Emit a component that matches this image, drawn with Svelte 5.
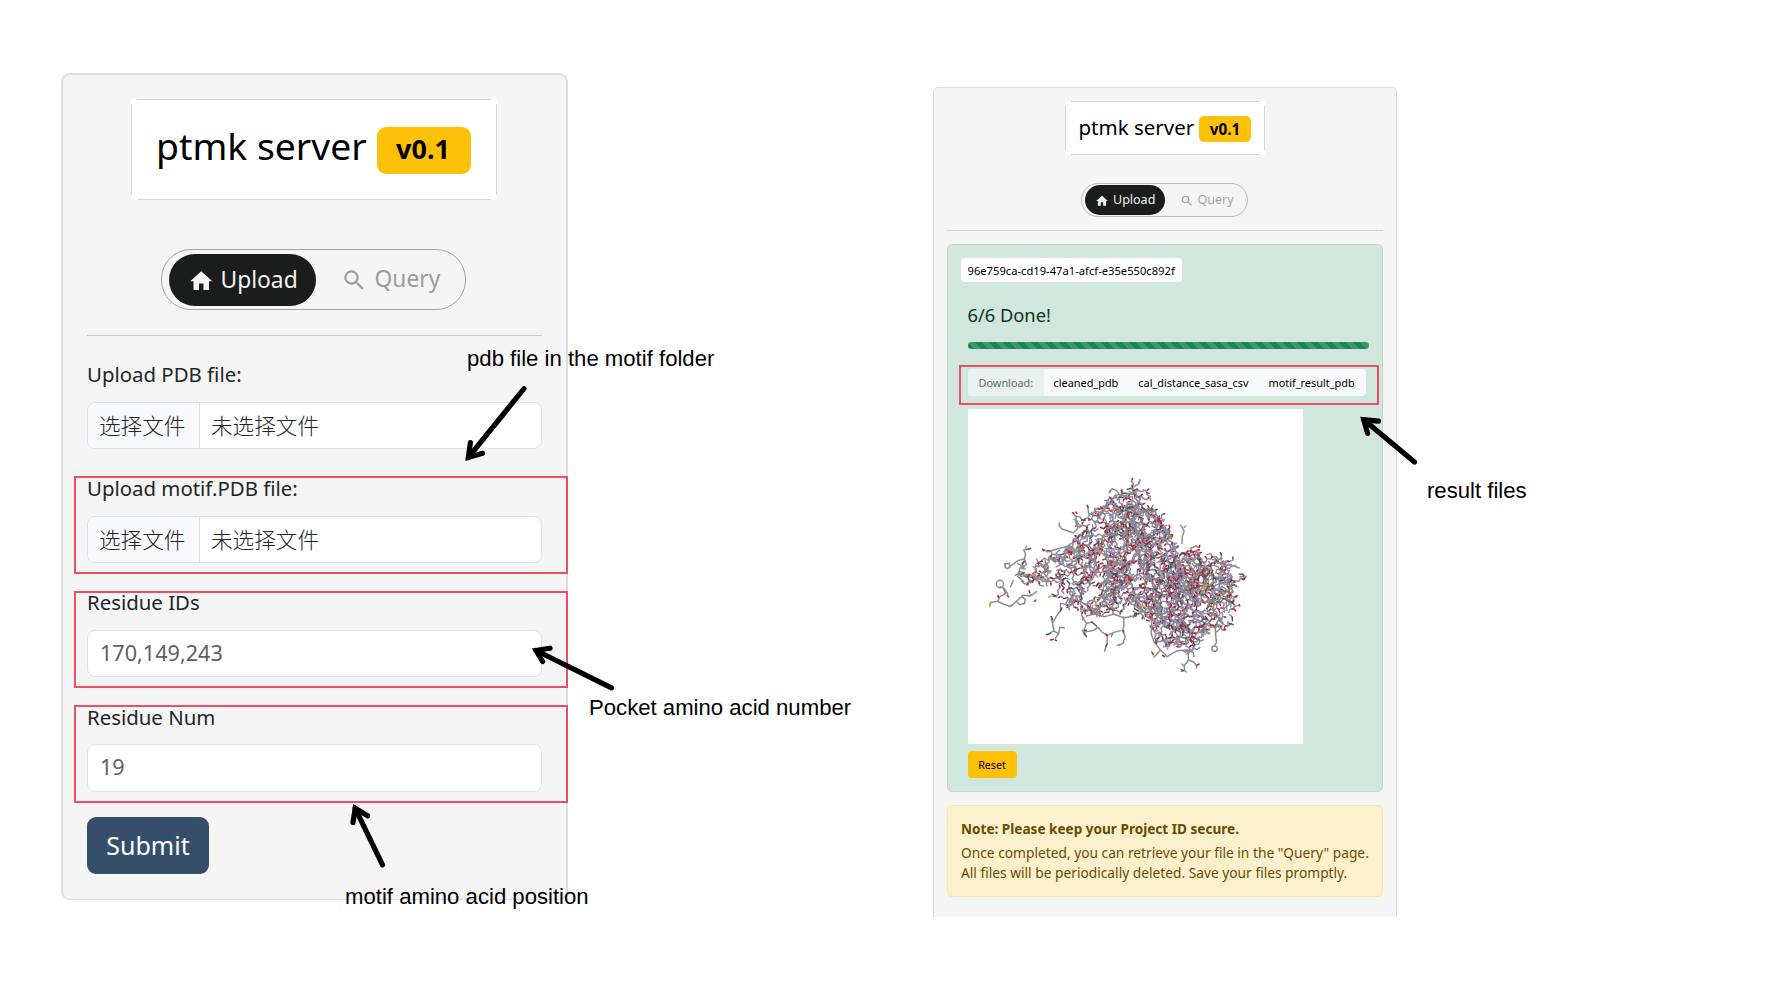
<script>
  const homePath = 'M10,20V14H14V20H19V12H22L12,3L2,12H5V20H10Z';
  const searchPath =
    'M9.5,3A6.5,6.5 0 0,1 16,9.5C16,11.11 15.41,12.59 14.44,13.73L14.71,14H15.5L20.5,19L19,20.5L14,15.5V14.71L13.73,14.44C12.59,15.41 11.11,16 9.5,16A6.5,6.5 0 0,1 3,9.5A6.5,6.5 0 0,1 9.5,3M9.5,5C7,5 5,7 5,9.5C5,12 7,14 9.5,14C12,14 14,12 14,9.5C14,7 12,5 9.5,5Z';

  const fields = [
    { label: 'Upload PDB file:', file: true },
    { label: 'Upload motif.PDB file:', file: true },
    { label: 'Residue IDs', value: '170,149,243' },
    { label: 'Residue Num', value: '19' }
  ];
  const downloads = ['cleaned_pdb', 'cal_distance_sasa_csv', 'motif_result_pdb'];

  // Each arrow: tail, tip, and the two barb ends.
  const arrows = [
    { tail: [524, 388.7], tip: [468.4, 457.4], a: [470.4, 442.5], b: [482.5, 453.2] },
    { tail: [611.5, 687.8], tip: [536, 650.5], a: [550, 648.2], b: [542.6, 661.5] },
    { tail: [382.5, 864.8], tip: [355.2, 808.3], a: [367.6, 815.8], b: [353, 822.5] },
    { tail: [1414.5, 462], tip: [1363.8, 419.8], a: [1378.5, 421.2], b: [1367.6, 433.4] }
  ];

  // Stick model of the protein: random bonded chains inside the outline.
  const outline = [
    [470, 98], [515, 78], [562, 92], [585, 150], [628, 195], [640, 255], [700, 265], [760, 288],
    [830, 315], [845, 375], [825, 440], [812, 500], [755, 505], [715, 560], [680, 595], [640, 550],
    [600, 585], [572, 520], [575, 478], [500, 468], [400, 462], [330, 440], [290, 410], [225, 375],
    [175, 372], [165, 312], [240, 303], [300, 268], [350, 230], [350, 180], [405, 145]
  ];
  const colours = { c: '#8b8b8d', n: '#8b8dc6', k: '#4c4d52', s: '#d3a22f', o: '#c2162b' };

  function inside(x, y) {
    let hit = false;
    for (let i = 0, j = outline.length - 1; i < outline.length; j = i++) {
      const [xi, yi] = outline[i];
      const [xj, yj] = outline[j];
      if (yi > y !== yj > y && x < ((xj - xi) * (y - yi)) / (yj - yi) + xi) hit = !hit;
    }
    return hit;
  }

  function buildMolecule() {
    let seed = 20711;
    const rnd = () => {
      seed = (seed + 0x6d2b79f5) | 0;
      let t = Math.imul(seed ^ (seed >>> 15), 1 | seed);
      t = (t + Math.imul(t ^ (t >>> 7), 61 | t)) ^ t;
      return ((t ^ (t >>> 14)) >>> 0) / 4294967296;
    };
    const layers = [];
    for (let layer = 0; layer < 10; layer++) {
      const d = { c: '', n: '', k: '', s: '', o: '' };
      for (let chain = 0; chain < 66; ) {
        let x = 150 + rnd() * 700;
        let y = 75 + rnd() * 530;
        if (!inside(x, y)) continue;
        if (x < 360 && rnd() < 0.45) continue;
        chain++;
        let angle = rnd() * Math.PI * 2;
        const steps = 4 + Math.floor(rnd() * 4);
        for (let i = 0; i < steps; i++) {
          angle += (i % 2 ? 1 : -1) * (0.7 + rnd() * 0.7);
          const nx = x + Math.cos(angle) * 11;
          const ny = y + Math.sin(angle) * 11;
          if (!inside(nx, ny) && rnd() < 0.6) break;
          const r = rnd();
          const kind = r < 0.66 ? 'c' : r < 0.88 ? 'n' : r < 0.995 ? 'k' : 's';
          d[kind] += `M${x.toFixed(1)} ${y.toFixed(1)}L${nx.toFixed(1)} ${ny.toFixed(1)}`;
          if (rnd() < 0.25) {
            const t = angle + (rnd() < 0.5 ? 1.1 : -1.1);
            const mx = nx + Math.cos(t) * 5;
            const my = ny + Math.sin(t) * 5;
            d.c += `M${nx.toFixed(1)} ${ny.toFixed(1)}L${mx.toFixed(1)} ${my.toFixed(1)}`;
            d.o += `M${mx.toFixed(1)} ${my.toFixed(1)}l${(Math.cos(t) * 4).toFixed(1)} ${(Math.sin(t) * 4).toFixed(1)}`;
          }
          x = nx;
          y = ny;
        }
      }
      layers.push(d);
    }
    return layers;
  }
  const layers = buildMolecule();

  // Side chains that stick out of the dense core.
  const strands = [
    ['c', 'M88 436L91 427L112 424L128 432L150 439L168 424L188 405L210 408L228 395M112 424L118 410L135 400L128 384L119 380M130 384L142 402M150 380L158 362M168 424L178 434L192 430L194 418L184 410M129 372a11 11 0 1 0 -22 0a11 11 0 1 0 22 0'],
    ['c', 'M150 318L172 302L192 297L195 282L190 270L204 267M192 297L198 315L178 325L172 350L190 365M135 312L146 310L149 320L142 326L134 322Z'],
    ['c', 'M296 196L303 206L322 213L338 219M338 219L352 205L346 180M448 96L455 86L468 92L478 104L492 108M520 80L532 74L538 62M382 140L384 160L400 165M338 160L347 172L346 190'],
    ['c', 'M664 250L666 228L671 214L665 202M690 265L705 258L716 262M250 268L262 276L280 270L300 264L326 258L340 265L342 284M338 244L336 262'],
    ['c', 'M300 430L300 452L288 468L276 490L280 512L262 524M280 512L294 522L284 536M294 522L298 502L312 504M330 436L300 430M276 490L272 470'],
    ['c', 'M360 440L364 468L378 490L394 486M378 490L370 512L376 528M376 515L398 512L412 502L424 516L440 526L458 518L480 512M440 526L440 548L434 568M458 518L452 530M490 470L490 500L486 512L494 530L488 550L476 555'],
    ['c', 'M378 468L400 462L432 470L460 462L490 474L520 468M575 470L572 520L580 545L600 570L580 592M600 570L620 590L650 572L682 570M682 570L684 600L672 616L672 632L662 634M672 632L678 636M684 600L700 606L708 616M664 612L672 620'],
    ['c', 'M764 500L766 530L768 548L762 556M770 566a8 8 0 1 0 -16 0a8 8 0 1 0 16 0M800 500L812 490M820 440L836 436M838 350L854 350M782 282L782 300M820 318L836 324M764 520L780 505'],
    ['n', 'M296 188L296 197M446 99L448 92M538 58L536 70M664 200L660 196M671 202L676 198M132 310L136 324M470 556L478 553M432 574L434 566M212 404L204 408M148 438L156 436M342 240L350 230M280 506L278 498M198 258L196 266M366 510L370 520M708 618L709 624M370 472L366 480M228 298L232 304'],
    ['k', 'M258 524L270 520M272 470L276 478M394 486L408 498M370 520L378 530M436 560L440 552M300 452L304 444M806 490L818 494M668 632L662 628'],
    ['s', 'M88 440L88 430M216 346L223 344M234 358L238 350M264 412L272 408M728 378L732 396M548 438L556 442M754 442L762 438'],
    ['o', 'M204 268L210 265M112 406L114 412M140 406L144 410M284 540L288 542M270 540L278 538M380 136L383 142M336 158L340 160M346 156L349 160M246 268L250 272M574 576L578 584M708 616L716 612M780 278L783 284M836 434L838 438M436 522L440 528M488 512L490 516M222 424L226 420M206 392L208 398M372 512L378 510M716 262L718 256M606 586L612 590M514 76L516 82M626 196L628 202M560 98L566 100']
  ];
</script>

{#snippet icon(path)}
  <svg class="icon" viewBox="0 0 24 24"><path d={path} fill="currentColor" /></svg>
{/snippet}

{#snippet heading()}
  <div class="brand">
    <span class="name">ptmk server</span>
    <span class="version">v0.1</span>
  </div>
  <nav class="tabs">
    <span class="tab active">{@render icon(homePath)}Upload</span>
    <span class="tab">{@render icon(searchPath)}Query</span>
  </nav>
  <hr />
{/snippet}

<main class="board">
  <section class="card form">
    {@render heading()}
    {#each fields as field}
      <div class="field">
        <span class="label">{field.label}</span>
        <div class="input">
          {#if field.file}
            <span class="choose">选择文件</span><span class="chosen">未选择文件</span>
          {:else}
            <span class="value">{field.value}</span>
          {/if}
        </div>
      </div>
    {/each}
    <button class="submit">Submit</button>
  </section>

  <section class="card result">
    {@render heading()}
    <div class="done">
      <span class="uuid">96e759ca-cd19-47a1-afcf-e35e550c892f</span>
      <div class="status">6/6 Done!</div>
      <div class="progress"></div>
      <div class="downloads">
        <span class="lead">Download:</span>
        {#each downloads as name}<span class="file">{name}</span>{/each}
      </div>
      <div class="viewer">
        <svg viewBox="22.5 -153 1005 1005">
          {#each layers as layer}
            {#each Object.entries(layer) as [kind, d]}
              <path {d} stroke={colours[kind]} />
            {/each}
          {/each}
          {#each strands as [kind, d]}
            <path {d} stroke={colours[kind]} />
          {/each}
        </svg>
      </div>
      <button class="reset">Reset</button>
    </div>
    <div class="note">
      <strong>Note: Please keep your Project ID secure.</strong>
      <span>Once completed, you can retrieve your file in the "Query" page.</span>
      <span>All files will be periodically deleted. Save your files promptly.</span>
    </div>
  </section>

  <div class="mark motif"></div>
  <div class="mark ids"></div>
  <div class="mark num"></div>
  <div class="mark files"></div>

  <svg class="arrows" viewBox="0 0 1778 1000">
    {#each arrows as w}
      <path d="M{w.tail}L{w.tip}" />
      <path d="M{w.a}L{w.tip}L{w.b}" />
    {/each}
  </svg>

  <span class="caption c1">pdb file in the motif folder</span>
  <span class="caption c2">Pocket amino acid number</span>
  <span class="caption c3">motif amino acid position</span>
  <span class="caption c4">result files</span>
</main>

<style>
  :global(body) { background: #fff; }
  .board {
    position: relative;
    box-sizing: border-box;
    width: 1778px;
    height: 1000px;
    padding-left: 61px;
    display: flex;
    align-items: flex-start;
    overflow: hidden;
    font-family: "Noto Sans", "Noto Sans CJK SC", sans-serif;
    color: #212529;
  }
  .board * { box-sizing: border-box; }
  button { border: 0; padding: 0; font-family: inherit; display: block; }
  span { white-space: nowrap; }

  .card {
    display: flex;
    flex-direction: column;
    background: #f5f5f5;
    flex: none;
  }
  .brand {
    align-self: center;
    display: flex;
    align-items: flex-start;
    color: #000;
    background:
      linear-gradient(#d6d6d6, #d6d6d6) center top / calc(100% - 12px) 1px no-repeat,
      linear-gradient(#d6d6d6, #d6d6d6) center bottom / calc(100% - 12px) 1px no-repeat,
      linear-gradient(#d6d6d6, #d6d6d6) left center / 1px calc(100% - 10px) no-repeat,
      linear-gradient(#d6d6d6, #d6d6d6) right center / 1px calc(100% - 10px) no-repeat,
      #fff;
    border-radius: 2px;
  }
  .version {
    background: #ffc107;
    font-weight: 700;
    text-align: center;
  }
  .tabs {
    align-self: center;
    display: flex;
    border: 1px solid #a3a3a3;
  }
  .tab { display: flex; align-items: center; color: #9c9c9c; }
  .tab.active { background: #1a1d1c; color: #f4f4f4; }
  hr { margin: 0; border: 0; background: #c9cacb; flex: none; }

  .form {
    width: 507px;
    height: 827px;
    margin-top: 73px;
    padding: 25px 24px 0 24px;
    border: 2px solid #dedede;
    border-bottom-width: 1px;
    border-radius: 9px;
  }
  .form .brand { width: 366px; height: 101px; padding: 24px 0 0 25px; margin: -1px 0 0 -1px; }
  .form .name { font-size: 37.3px; line-height: 46px; width: 221px; }
  .form .version {
    width: 94px; height: 47px; margin-top: 4px; line-height: 44px; padding-right: 2px;
    font-size: 27px; border-radius: 9px;
  }
  .form .tabs { width: 305px; height: 61px; margin-top: 49px; margin-left: -2px; padding: 4px 7px; border-radius: 30px; }
  .form .tab { font-size: 22.8px; line-height: 40px; padding: 0 0 1px 25px; }
  .form .tab.active { width: 147px; height: 52px; padding: 0 0 1px 19px; border-radius: 26px; }
  .form .icon { width: 26.5px; height: 26.5px; margin: 3px 6px 0 0; }
  .form hr { height: 1px; margin: 25px 0 26px; }
  .form .tabs .tab:last-child .icon { margin-right: 7px; }

  .field { display: flex; flex-direction: column; height: 114.2px; flex: none; }
  .label { font-size: 20.4px; line-height: 25px; height: 39.5px; flex: none; }
  .input {
    display: flex;
    align-items: stretch;
    height: 47.5px;
    border: 1px solid #dee2e6;
    border-radius: 8px;
    background: #fff;
    overflow: hidden;
    font-size: 21.6px;
    line-height: 43px;
  }
  .choose {
    font-family: "Noto Sans CJK SC", sans-serif;
    font-weight: 300;
    width: 112px;
    padding-left: 11px;
    background: #f8f9fa;
    border-right: 1px solid #dee2e6;
  }
  .chosen { padding-left: 11px; font-family: "Noto Sans CJK SC", sans-serif; font-weight: 300; }
  .value { padding-left: 12px; color: #5d6266; }
  .submit {
    width: 122px; height: 57px; flex: none;
    margin-top: -2px;
    padding-bottom: 1px;
    border-radius: 9px;
    background: #354f6b;
    color: #fff;
    font-size: 25px;
  }

  .result {
    width: 464px;
    height: 830px;
    margin: 87px 0 0 365px;
    padding: 13px 13px 0;
    border: 1px solid #dcdcdc;
    border-bottom: 0;
    border-radius: 5px 5px 0 0;
  }
  .result .brand { width: 200px; height: 54px; padding: 13px 0 0 13.5px; }
  .result .name { font-size: 20.5px; line-height: 26px; width: 120.5px; }
  .result .version {
    width: 52px; height: 26px; margin-top: 2px; line-height: 26px;
    font-size: 15.3px; border-radius: 5px;
  }
  .result .tabs { width: 167px; height: 34px; margin-top: 28px; margin-left: -1px; padding: 1px 3px; border-radius: 17px; border-color: #bdbdbd; }
  .result .tab { font-size: 12.5px; padding: 0 0 1px 14.5px; color: #a5a5a5; }
  .result .tab.active { width: 80px; height: 30px; padding: 0 0 1px 10px; border-radius: 15px; color: #f4f4f4; }
  .result .icon { width: 14px; height: 14px; margin: 3px 4px 0 0; }
  .result hr { height: 1px; margin: 13px 0; background: #d3d4d4; }

  .done {
    display: flex;
    flex-direction: column;
    align-items: flex-start;
    height: 548px;
    padding: 13px 13px 0 19.5px;
    border: 1px solid #b9dbcb;
    border-radius: 5px;
    background: #d1e7dd;
    flex: none;
  }
  .uuid {
    margin-left: -6.5px;
    width: 220.5px; height: 24px; line-height: 25px;
    padding-left: 6.5px;
    border-radius: 4px;
    background: #fff;
    color: #000;
    font-size: 11.2px;
  }
  .status { margin-top: 21px; font-size: 18.3px; line-height: 24px; color: #0a3622; }
  .progress {
    align-self: stretch;
    height: 7px;
    margin-top: 15px;
    border-radius: 4px;
    background:
      linear-gradient(45deg, rgba(255,255,255,.15) 25%, transparent 25%, transparent 50%, rgba(255,255,255,.15) 50%, rgba(255,255,255,.15) 75%, transparent 75%) 0 0 / 14px 14px,
      #198754;
  }
  .downloads {
    display: flex;
    margin-top: 20px;
    height: 27px;
    width: 398px;
    line-height: 27px;
    border-radius: 4px;
    overflow: hidden;
    background: #f8f9fa;
    font-size: 10.9px;
    color: #000;
  }
  .lead { width: 76px; padding-left: 11px; background: #e8f1ed; color: #646b68; flex: none; }
  .file { padding-left: 10px; padding-right: 10px; }
  .viewer { width: 335px; height: 335px; margin-top: 13px; background: #fff; }
  .viewer svg { display: block; width: 335px; height: 335px; fill: none; stroke-width: 4.3; stroke-linecap: round; }
  .reset {
    width: 49px; height: 27px; margin-top: 7px;
    border-radius: 4px;
    background: #ffc107;
    color: #000;
    font-size: 10.7px;
  }
  .note {
    display: flex;
    flex-direction: column;
    height: 92px;
    margin-top: 13px;
    padding: 13px;
    border: 1px solid #fde7a8;
    border-radius: 5px;
    background: #fdf1cd;
    color: #664d03;
    font-size: 13.76px;
    line-height: 20px;
    flex: none;
  }
  .note strong { font-size: 13.58px; margin-bottom: 4px; }

  .mark { position: absolute; border: 2px solid #ea5164; }
  .motif { left: 74px; top: 476px; width: 494px; height: 98px; }
  .ids { left: 74px; top: 591px; width: 494px; height: 97px; }
  .num { left: 74px; top: 705px; width: 494px; height: 98px; }
  .files { left: 959px; top: 365px; width: 420px; height: 40px; }
  .arrows {
    position: absolute;
    left: 0;
    top: 0;
    width: 1778px;
    height: 1000px;
    fill: none;
    stroke: #000;
    stroke-width: 5.2;
    stroke-linecap: round;
    stroke-miterlimit: 10;
  }
  .caption {
    position: absolute;
    font-family: "Liberation Sans", Arial, sans-serif;
    font-size: 22.15px;
    line-height: 26px;
    color: #000;
  }
  .c1 { left: 467px; top: 346px; }
  .c2 { left: 589px; top: 695px; }
  .c3 { left: 345px; top: 884px; }
  .c4 { left: 1427px; top: 478px; }
</style>
